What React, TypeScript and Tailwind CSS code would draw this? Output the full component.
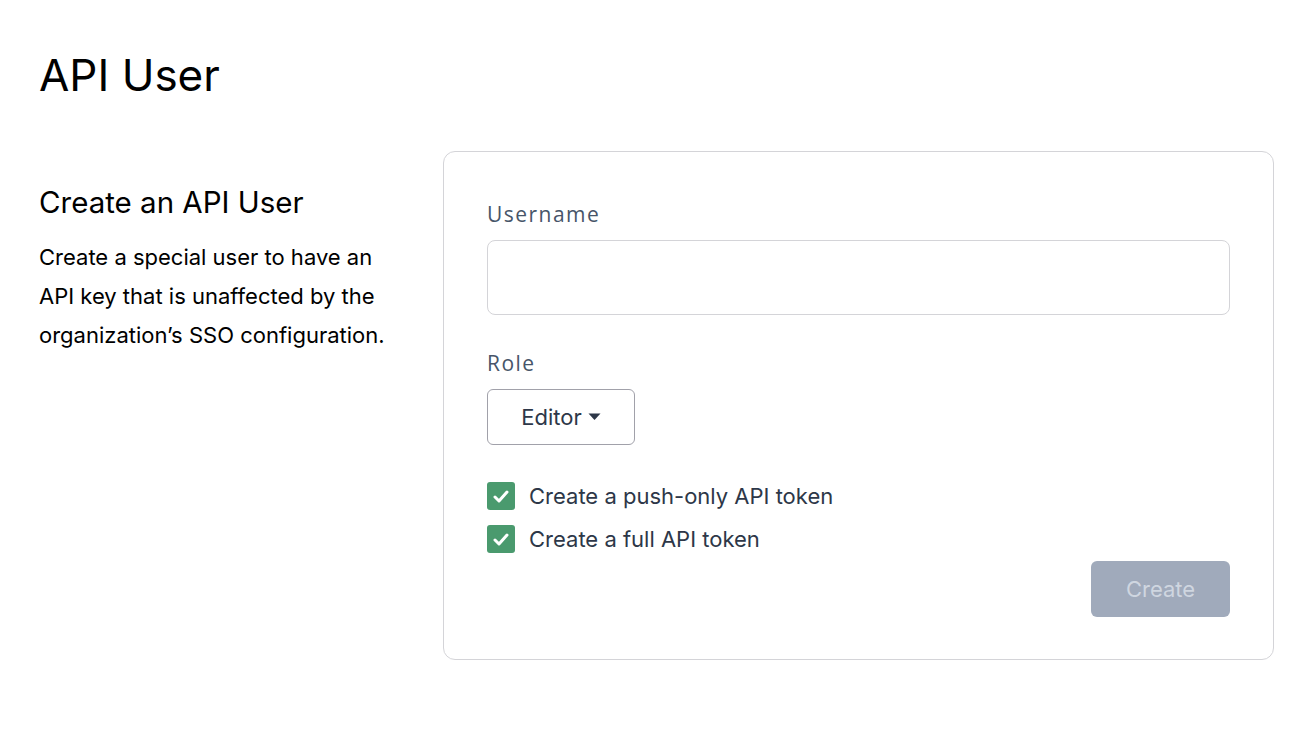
import React from "react";

export default function App() {
  return (
    <div className="min-h-screen bg-white text-black" style={{ fontFamily: "Inter, 'Liberation Sans', sans-serif" }}>
      <div className="pl-[39px] pr-[38px] pt-[50px]">
        <h1 className="text-[44px] leading-[50px] font-normal">API User</h1>
        <div className="mt-[51px] flex">
          <div className="w-[404px] shrink-0 pt-[33px]">
            <h2 className="text-[29.5px] leading-[36px] font-normal">Create an API User</h2>
            <p className="mt-[18px] text-[22px] leading-[39px] w-[360px]">
              Create a special user to have an API key that is unaffected by the organization’s SSO configuration.
            </p>
          </div>
          <div className="flex-1 rounded-[12px] border border-[#d4d4d8] pl-[43px] pr-[43px] pt-[47px] pb-[42px]">
            <label className="block text-[21px] leading-[30px] tracking-[0.07em] text-[#475569]" style={{ fontFamily: "'Open Sans', sans-serif" }}>
              Username
            </label>
            <input className="mt-[11px] block w-full h-[75px] rounded-[8px] border border-[#d4d4d8] outline-none px-4 text-[20px]" />
            <label className="mt-[33px] block text-[21px] leading-[30px] tracking-[0.07em] text-[#475569]" style={{ fontFamily: "'Open Sans', sans-serif" }}>
              Role
            </label>
            <button className="mt-[11px] flex items-center justify-center gap-[6px] w-[148px] h-[56px] rounded-[6px] border border-[#a1a1aa] bg-white text-[22px] text-[#2d3748]">
              <span>Editor</span>
              <svg width="13" height="8" viewBox="0 0 13 8"><path d="M0.5 0.5 L12.5 0.5 L6.5 7 Z" fill="#2d3748" /></svg>
            </button>
            <div className="mt-[37px] flex flex-col gap-[15px]">
              {["Create a push-only API token", "Create a full API token"].map((t) => (
                <div key={t} className="flex items-center gap-[14px] h-[28px]">
                  <div className="w-[28px] h-[28px] rounded-[3px] bg-[#4a9a6e] flex items-center justify-center">
                    <svg width="16" height="13" viewBox="0 0 16 13"><path d="M2 7 L6 11 L14 2" stroke="white" strokeWidth="3" fill="none" strokeLinecap="round" strokeLinejoin="round" /></svg>
                  </div>
                  <span className="text-[22px] text-[#2d3748]">{t}</span>
                </div>
              ))}
            </div>
            <div className="flex justify-end mt-[8px]">
              <button className="w-[139px] h-[56px] rounded-[6px] bg-[#a0aabb] text-[22px] text-[#cfd6e0]">Create</button>
            </div>
          </div>
        </div>
      </div>
    </div>
  );
}
